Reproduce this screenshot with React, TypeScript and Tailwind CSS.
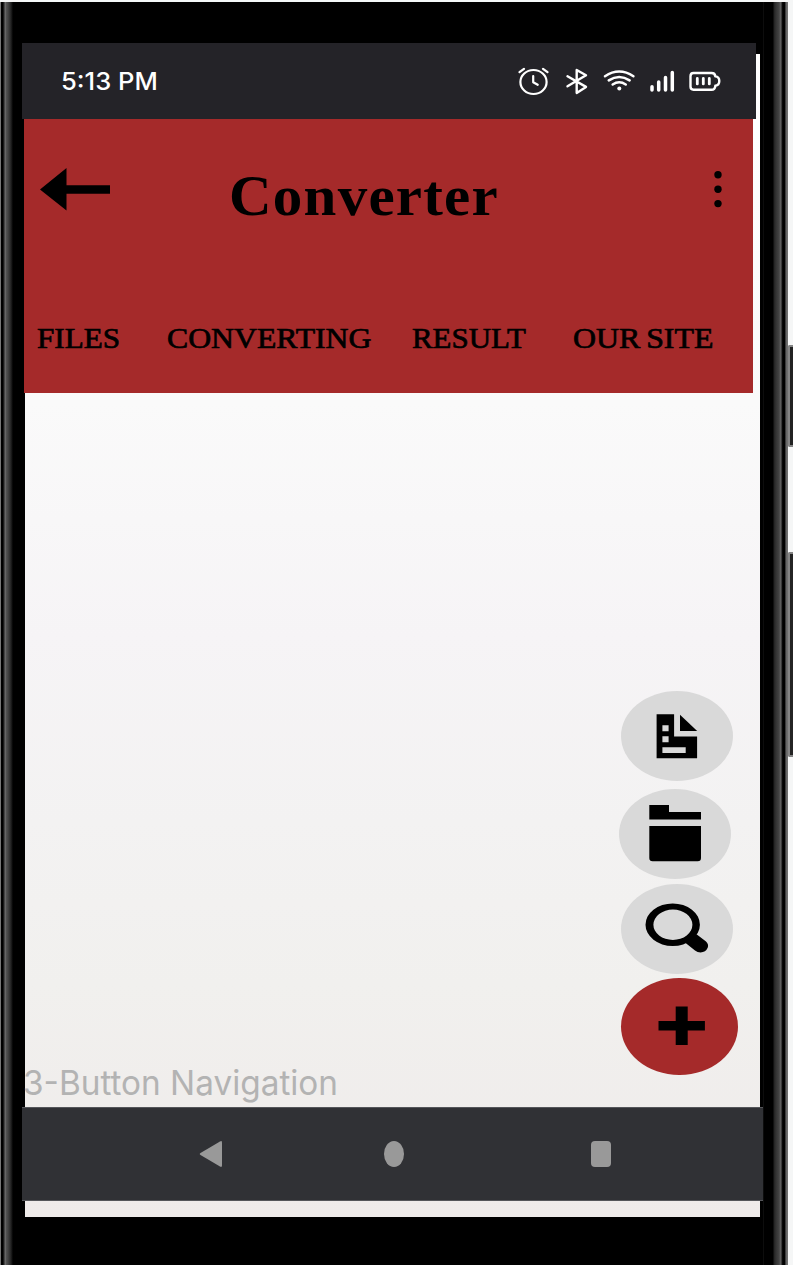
import type { ReactNode } from "react";

const tabs = [
  { label: "FILES", cell: "w-[130px]", text: "scale-x-[1.075]" },
  { label: "CONVERTING", cell: "w-[245px]", text: "scale-x-[1.095]" },
  { label: "RESULT", cell: "w-[161px]", text: "scale-x-[1.065]" },
  { label: "OUR SITE", cell: "w-[145px]", text: "scale-x-[1.1] [word-spacing:-2px]" },
];

function StatusBar() {
  return (
    <div className="flex h-[76px] w-[734px] items-center bg-[#242328] pl-[39px] pr-[35px]">
      <span className="mt-[2px] origin-left scale-x-[1.065] whitespace-nowrap font-['Inter'] text-[24px] font-medium leading-[76px] text-white">
        5:13 PM
      </span>
      <div className="ml-auto flex items-center">
        <svg className="mr-4 h-8 w-8" viewBox="517.5 65 32 32" fill="none" stroke="#fff" strokeWidth="2.2" strokeLinecap="round" strokeLinejoin="round">
          <ellipse cx="534" cy="82" rx="13.1" ry="12" />
          <path d="M533.700 76v6.200l4.500 2.600M520 72.200l4.500-3.400M548 72.200l-4.500-3.400" />
        </svg>
        <svg className="mr-[14px] h-8 w-[24px]" viewBox="565 65 24 32" fill="none" stroke="#fff" strokeWidth="2.4" strokeLinecap="round" strokeLinejoin="round">
          <path d="M567.500 76.300l18.500 10.600-9.300 6V70l9.300 5.300L567.500 86.300" />
        </svg>
        <svg className="mr-[13px] h-8 w-8" viewBox="603 65 32 32" fill="none" stroke="#fff" strokeWidth="2.500" strokeLinecap="round">
          <path d="M605 76.200q14.200-9.400 28.400 0M608.800 80.400q10.400-7 20.800 0M612.700 84.500q6.500-4.500 13 0" />
          <circle cx="619.300" cy="88.600" r="2" fill="#fff" stroke="none" />
        </svg>
        <svg className="mr-[13px] h-8 w-[28px]" viewBox="648 65 28 32" fill="none" stroke="#fff" strokeWidth="3.500" strokeLinecap="round">
          <path d="M652 86.800v3.200M658.700 82v8M665.500 77.500V90M672.300 72.500V90" />
        </svg>
        <svg className="h-8 w-[32px]" viewBox="689 65 32 32" fill="none" stroke="#fff" strokeWidth="2.400" strokeLinecap="round" strokeLinejoin="round">
          <path d="M693.500 73h18q3.500 0 3.800 3.400q4 .4 4 4.700t-4 4.700q-.3 4-3.800 4h-18q-3 0-3-3.200V76.200q0-3.200 3-3.200z" />
          <path strokeWidth="2.800" d="M697.300 78.500v5.400M703.300 78.500v5.400M709.300 78.500v5.400" />
        </svg>
      </div>
    </div>
  );
}

function Header() {
  return (
    <header className="ml-[2px] flex h-[273.500px] w-[729px] flex-col bg-[#a52a2a] text-black">
      <div className="flex h-[140px] items-center pl-4 pr-[30px]">
        <svg className="h-[44px] w-[71px]" viewBox="0 0 71 44">
          <path d="M0 22.500L26.500 1v17.300h43.500v8.500H26.500v16.700z" />
        </svg>
        <h1 className="ml-[118px] mt-[14px] origin-left scale-x-[1.035] whitespace-nowrap font-['Liberation_Serif'] text-[57px] font-bold leading-[64px] tracking-[1.200px]">
          Converter
        </h1>
        <svg className="ml-auto h-[38px] w-[10px]" viewBox="0 0 10 38">
          <circle cx="5" cy="4.800" r="3.700" />
          <circle cx="5" cy="19.300" r="3.700" />
          <circle cx="5" cy="33.600" r="3.700" />
        </svg>
      </div>
      <nav className="mt-[61px] flex pl-[13px] font-['Liberation_Serif'] text-[29px] font-normal leading-9 [-webkit-text-stroke:0.700px_#000]">
        {tabs.map((t) => (
          <div key={t.label} className={t.cell}>
            <a className={`inline-block origin-left whitespace-nowrap ${t.text}`}>{t.label}</a>
          </div>
        ))}
      </nav>
    </header>
  );
}

function Fab({ className, viewBox, children }: { className: string; viewBox: string; children: ReactNode }) {
  return (
    <button className={`block shrink-0 rounded-[50%] ${className}`}>
      <svg className="h-full w-full" viewBox={viewBox}>
        {children}
      </svg>
    </button>
  );
}

function Actions() {
  return (
    <div className="flex w-[118px] flex-col items-start">
      <Fab className="ml-[2px] h-[90px] w-[112px] bg-[#d9d9d9]" viewBox="621 691 112 90">
        <path
          fillRule="evenodd"
          d="M656.600 714.300h17.500v22.200h23v21.700h-40.500zM662.400 725.300v6h6.200v-6zM662.400 736.300v6h6.200v-6zM662.400 747.300v5.600h23.300v-5.600z"
        />
        <path d="M680 714.800v16.200h17.200z" />
      </Fab>
      <Fab className="mt-[7.500px] h-[90px] w-[112px] bg-[#d9d9d9]" viewBox="619 788.5 112 90">
        <path d="M649.300 804.500h19.700v7H701v7.400h-51.700zM649.300 825.400H701v32q0 3.300-3.300 3.300h-45.100q-3.300 0-3.300-3.300z" />
      </Fab>
      <Fab className="ml-[2px] mt-[5.500px] h-[90px] w-[112px] bg-[#d9d9d9]" viewBox="621 884 112 90">
        <path fillRule="evenodd" d="M645.500 924.700a27.200 21.300 0 1 0 54.400 0a27.200 21.300 0 1 0-54.400 0zM653.400 924.700a19.500 15.200 0 1 1 39 0a19.500 15.200 0 1 1-39 0z" />
        <path d="M696.500 934.300l9.500 7.300q3 3 1.700 6.200q-2 4.600-7.200 4.600q-3 0-5.500-2l-9.700-7.700z" />
      </Fab>
      <Fab className="ml-[2px] mt-[3.500px] h-[97.500px] w-[117px] bg-[#a52a2a]" viewBox="621 977.5 117 97.5">
        <path d="M675.700 1006h12v14.400h17.200v9.700h-17.200v14.400h-12v-14.400h-17.200v-9.700h17.200z" />
      </Fab>
    </div>
  );
}

function SystemNavigation() {
  return (
    <div className="flex h-[94px] w-[741px] items-center border-y border-[#55565a] bg-[#303135]">
      <svg className="ml-[177px] h-[26px] w-[24px]" viewBox="0 0 24 26" fill="#999">
        <path d="M1.500 12L21 .4q2-.9 2 1v23.200q0 1.900-2 1L1.500 14q-1.500-1 0-2z" />
      </svg>
      <div className="ml-[160.500px] h-[26px] w-[20px] rounded-[50%] bg-[#999]" />
      <div className="ml-[187px] h-[26px] w-[20px] rounded-[4px] bg-[#999]" />
    </div>
  );
}

function SideKeys() {
  return (
    <div className="flex w-[5px] flex-col items-stretch">
      <div className="mt-[345px] h-[102px] rounded-l-[2px] border-2 border-r-0 border-[#858585] bg-[#222]" />
      <div className="mt-[105px] h-[205px] rounded-l-[2px] border-2 border-r-0 border-[#858585] bg-[#242424]" />
    </div>
  );
}

export default function App() {
  return (
    <div className="flex h-[1265px] w-[793px] overflow-hidden bg-[#f5f6f6]">
      <div className="mt-[2px] w-[22px] shrink-0 bg-[linear-gradient(90deg,#777_0,#777_1px,#000_1px,#000_3px,#222_3px,#111_4px,#777_5px,#555_6px,#444_8px,#222_11px,#000_13px)]" />
      <div className="grid w-[741px] shrink-0 bg-[linear-gradient(#f5f8f8_2px,#000_2px)]">
        <div className="col-start-1 row-start-1 ml-[3px] mt-[54px] h-[1163px] w-[735px] bg-[linear-gradient(#fff_0%,#fafafa_30%,#f6f4f6_50%,#f3f2f2_66%,#f1f0ee_80%,#efebea_100%)]" />
        <div className="z-10 col-start-1 row-start-1 flex flex-col pt-[43px]">
          <StatusBar />
          <Header />
          <main className="flex h-[714.500px] items-end justify-between pl-px pr-[26px]">
            <p className="mb-[3px] origin-left scale-x-[0.980] whitespace-nowrap font-['Inter'] text-[34px] leading-[42px] text-[#b3b3b3]">
              3-Button Navigation
            </p>
            <div className="mb-[32px]">
              <Actions />
            </div>
          </main>
          <SystemNavigation />
        </div>
      </div>
      <div className="mt-[2px] w-[25px] shrink-0 bg-[linear-gradient(90deg,#1a1a1a_0,#000_1px,#000_10px,#222_11px,#333_13px,#444_16px,#666_18px,#111_19px,#000_20px,#000_22px,#777_23px,#555_24px,#888_25px)]" />
      <SideKeys />
    </div>
  );
}
